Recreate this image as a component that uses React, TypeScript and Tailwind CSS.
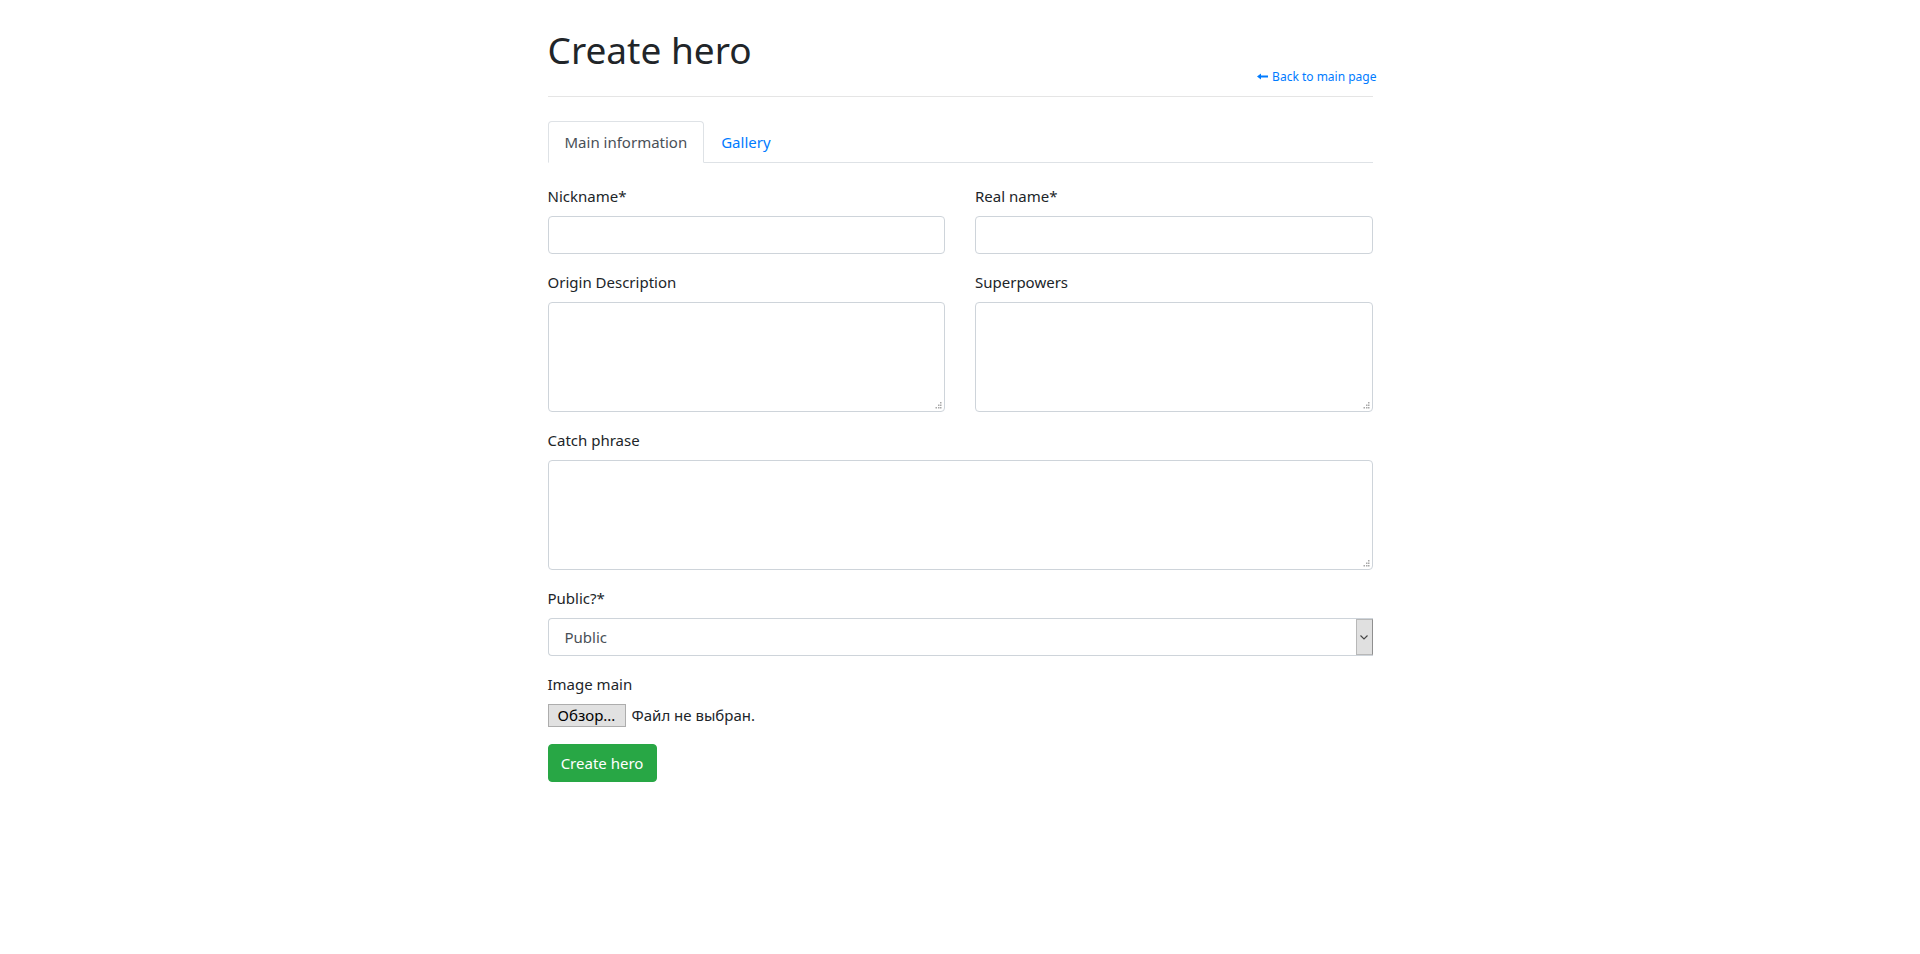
import React from "react";

function Label({ children }: { children: React.ReactNode }) {
  return <label className="mb-2 block text-[15px] leading-6">{children}</label>;
}

function Grip() {
  return (
    <svg
      className="pointer-events-none absolute bottom-[3px] right-[3px]"
      width="7"
      height="7"
      viewBox="0 0 7 7"
      aria-hidden="true"
    >
      <rect x="5" y="0" width="1.5" height="1.5" fill="#a8a8a8" />
      <rect x="3" y="2.5" width="1.5" height="1.5" fill="#a8a8a8" />
      <rect x="5" y="2.5" width="1.5" height="1.5" fill="#a8a8a8" />
      <rect x="0.5" y="5" width="1.5" height="1.5" fill="#a8a8a8" />
      <rect x="3" y="5" width="1.5" height="1.5" fill="#a8a8a8" />
      <rect x="5" y="5" width="1.5" height="1.5" fill="#a8a8a8" />
    </svg>
  );
}

function Area() {
  return (
    <div className="relative">
      <textarea className="block h-[110px] w-full resize-none rounded-[4px] border border-[#ced4da] bg-white px-3 py-1.5 text-[15px] outline-none" />
      <Grip />
    </div>
  );
}

export default function App() {
  return (
    <div className="min-h-screen bg-white font-['Segoe_UI','Noto_Sans',sans-serif] text-[15px] text-[#212529]">
      <div className="mx-auto w-[855px] px-[15px] pt-[24px]">
        <div className="flex items-end justify-between">
          <h1 className="mb-[13px] pt-[2px] text-[37px] font-normal leading-[48px]">Create hero</h1>
          <a href="#" className="mb-px mr-[-4px] flex items-center gap-[4px] text-[12px] leading-[19px] text-[#007bff]">
            <svg width="11" height="7" viewBox="0 0 11 7" aria-hidden="true">
              <path d="M0 3.5 L4 0.5 L4 2.5 L11 2.5 L11 4.5 L4 4.5 L4 6.5 Z" fill="#007bff" />
            </svg>
            Back to main page
          </a>
        </div>
        <hr className="mt-[9px] border-0 border-t border-[rgba(0,0,0,0.1)]" />

        <nav className="mt-[24px] flex border-b border-[#dee2e6]">
          <a href="#" className="-mb-px rounded-t-[4px] border border-[#dee2e6] border-b-white bg-white px-4 py-2 leading-6 text-[#495057]">
            Main information
          </a>
          <a href="#" className="-mb-px rounded-t-[4px] border border-transparent px-4 py-2 leading-6 text-[#007bff]">
            Gallery
          </a>
        </nav>

        <form className="pt-[21px]" onSubmit={(e) => e.preventDefault()}>
          <div className="grid grid-cols-2 gap-x-[30px]">
            <div className="mb-4">
              <Label>Nickname*</Label>
              <input className="block h-[38px] w-full rounded-[4px] border border-[#ced4da] bg-white px-3 text-[15px] outline-none" />
            </div>
            <div className="mb-4">
              <Label>Real name*</Label>
              <input className="block h-[38px] w-full rounded-[4px] border border-[#ced4da] bg-white px-3 text-[15px] outline-none" />
            </div>
            <div className="mb-4">
              <Label>Origin Description</Label>
              <Area />
            </div>
            <div className="mb-4">
              <Label>Superpowers</Label>
              <Area />
            </div>
          </div>

          <div className="mb-4">
            <Label>Catch phrase</Label>
            <Area />
          </div>

          <div className="mb-4">
            <Label>Public?*</Label>
            <div className="flex h-[38px] w-full items-center rounded-l-[4px] border border-r-0 border-[#ced4da] bg-white">
              <span className="pl-[16px] leading-6 text-[#495057]">Public</span>
              <div className="ml-auto flex h-[36px] w-[17px] items-center justify-center border border-[#b8b8b8] border-r-[#8f8f8f] bg-[#e0e0e0]">
                <svg width="8" height="5" viewBox="0 0 8 5" aria-hidden="true">
                  <path d="M0.5 0.5 L4 4 L7.5 0.5" fill="none" stroke="#444" strokeWidth="1.1" />
                </svg>
              </div>
            </div>
          </div>

          <div className="mb-4">
            <Label>Image main</Label>
            <div className="flex items-center">
              <span className="flex h-[23px] w-[78px] items-center justify-center border border-[#adadad] bg-[#e1e1e1] text-[15px] text-black">
                Обзор...
              </span>
              <span className="ml-[6px] text-[15px] text-[#212529]">Файл не выбран.</span>
            </div>
          </div>

          <button
            type="submit"
            className="mt-px h-[38px] w-[109px] rounded-[4px] border border-[#28a745] bg-[#28a745] text-[15px] leading-6 text-white"
          >
            Create hero
          </button>
        </form>
      </div>
    </div>
  );
}
